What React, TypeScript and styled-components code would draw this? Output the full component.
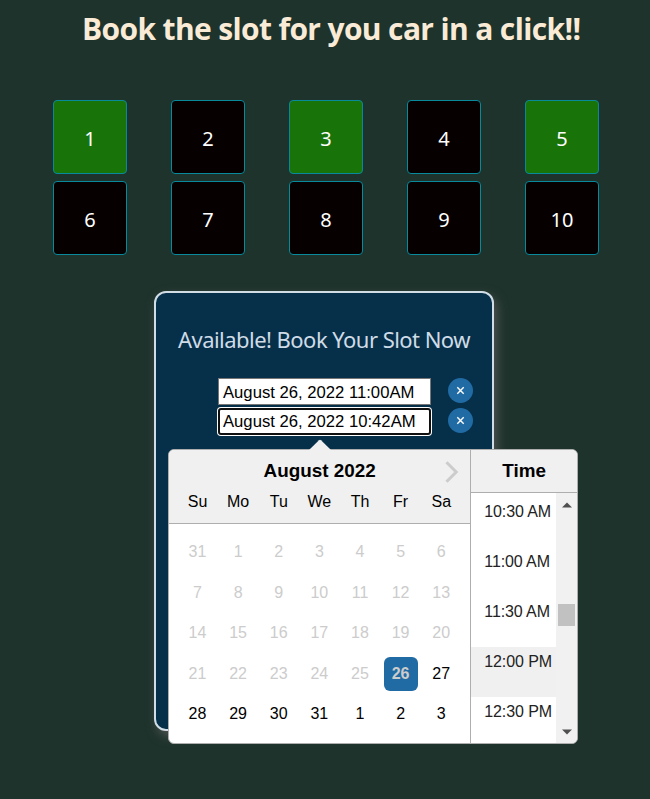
import React from "react";
import styled, { createGlobalStyle } from "styled-components";

const arial = `"Liberation Sans", Arial, sans-serif`;

const GlobalStyle = createGlobalStyle`
  * { box-sizing: border-box; }
  body { margin: 0; background: #1e332c; overflow: hidden; }
`;

const Page = styled.main`
  height: 799px;
  overflow: hidden;
  background: #1e332c;
`;

const Heading = styled.h1`
  margin: 0;
  padding: 9px 0 0 82px;
  height: 100px;
  color: #faebd7;
  font: 700 30px/40px "Open Sans", sans-serif;
  letter-spacing: -0.64px;
  white-space: nowrap;
`;

const SlotGrid = styled.section`
  display: grid;
  grid-template-columns: repeat(5, 74px);
  gap: 7px 44px;
  margin-left: 53px;
`;

const Slot = styled.button<{ $free: boolean }>`
  height: 74px;
  padding: 2px 0 0;
  border: 1px solid #088a9c;
  border-radius: 4px;
  background: ${(p) => (p.$free ? "#187408" : "#060000")};
  color: #fff;
  font: 20px "Noto Sans", sans-serif;
`;

const Card = styled.section`
  position: relative;
  width: 340px;
  height: 440px;
  margin: 36px 0 0 154px;
  border: 2px solid #d1dde5;
  border-radius: 12px;
  background: #06304a;
  box-shadow: 3px 5px 12px -1px #5a5a5a;
`;

const CardTitle = styled.h2`
  margin: 0;
  padding: 29px 0 0 22px;
  height: 85px;
  color: #cfdbe6;
  font: 400 22px/34px "Noto Sans", sans-serif;
  letter-spacing: -0.54px;
  white-space: nowrap;
`;

const FieldRow = styled.div`
  display: flex;
  align-items: flex-start;
  gap: 17px;
  height: 30px;
  padding-left: 62px;
`;

const DateInput = styled.input<{ $focused?: boolean }>`
  width: 213px;
  height: 27px;
  padding: ${(p) => (p.$focused ? "1px 3px" : "2px 4px 0")};
  border: ${(p) => (p.$focused ? "2px solid #101010" : "1px solid #767676")};
  border-radius: ${(p) => (p.$focused ? "3px" : "0")};
  outline: 0;
  box-shadow: ${(p) => (p.$focused ? "0 0 0 1px #fff" : "none")};
  background: #fff;
  color: #000;
  font: 16.67px ${arial};
`;

const ClearButton = styled.button`
  display: grid;
  place-items: center;
  width: 25px;
  height: 25px;
  padding: 0;
  border: 0;
  border-radius: 50%;
  background: #216ba5;
  color: #fff;
`;

const Popper = styled.div`
  position: absolute;
  top: 156px;
  left: 12px;
  display: flex;
  width: 410px;
  height: 295px;
  border: 1px solid #aeaeae;
  border-radius: 6px;
  background: #fff;
  color: #000;
  font: 16px ${arial};
`;

const Pointer = styled.svg`
  position: absolute;
  top: -11px;
  left: 140px;
`;

const Month = styled.div`
  width: 302px;
`;

const MonthHeader = styled.header`
  position: relative;
  height: 74px;
  padding-top: 10px;
  border-bottom: 1px solid #aeaeae;
  border-radius: 5px 0 0 0;
  background: #f0f0f0;
`;

const HeaderTitle = styled.div`
  height: 22px;
  text-align: center;
  font: 700 18.88px/22px ${arial};
`;

const NextArrow = styled.svg`
  position: absolute;
  top: 10px;
  right: 11px;
`;

const Week = styled.div`
  display: grid;
  grid-template-columns: repeat(7, 34px);
  column-gap: 6.64px;
  margin-left: 11.5px;
`;

const WeekDay = styled.span`
  height: 40px;
  line-height: 40px;
  text-align: center;
`;

const Weeks = styled.div`
  padding-top: 8px;
`;

const Day = styled.span<{ $muted: boolean; $selected: boolean }>`
  height: 34px;
  margin: 3.25px 0;
  border-radius: 6px;
  line-height: 34px;
  text-align: center;
  background: ${(p) => (p.$selected ? "#216ba5" : "transparent")};
  color: ${(p) => (p.$muted || p.$selected ? "#ccc" : "#000")};
  font-weight: ${(p) => (p.$selected ? 700 : 400)};
`;

const TimePanel = styled.div`
  display: flex;
  flex-direction: column;
  width: 107px;
  border-left: 1px solid #aeaeae;
`;

const TimeHeader = styled.header`
  height: 43px;
  padding-top: 10px;
  border-bottom: 1px solid #aeaeae;
  border-radius: 0 5px 0 0;
  background: #f0f0f0;
`;

const TimeBody = styled.div`
  display: flex;
  flex: 1;
  min-height: 0;
`;

const TimeList = styled.div`
  width: 85px;
  padding-top: 4px;
  overflow: hidden;
`;

const TimeItem = styled.div<{ $active: boolean }>`
  height: 50px;
  padding: 6px 0 0 13px;
  background: ${(p) => (p.$active ? "#f0f0f0" : "transparent")};
  color: #222;
  line-height: 18px;
  letter-spacing: -0.1px;
  white-space: nowrap;
`;

const ScrollTrack = styled.div`
  display: flex;
  flex: 1;
  flex-direction: column;
  align-items: center;
  justify-content: space-between;
  padding: 9px 0 8px;
  border-radius: 0 0 5px 0;
  background: #f1f1f1;
`;

const ScrollThumb = styled.div`
  width: 17px;
  height: 22px;
  margin-bottom: 7px;
  background: #c1c1c1;
`;

const slots = Array.from({ length: 10 }, (_, i) => i + 1);
const freeSlots = [1, 3, 5];
const weekDays = ["Su", "Mo", "Tu", "We", "Th", "Fr", "Sa"];
const weeks = [
  [31, 1, 2, 3, 4, 5, 6],
  [7, 8, 9, 10, 11, 12, 13],
  [14, 15, 16, 17, 18, 19, 20],
  [21, 22, 23, 24, 25, 26, 27],
  [28, 29, 30, 31, 1, 2, 3],
];
const times = ["10:30 AM", "11:00 AM", "11:30 AM", "12:00 PM", "12:30 PM"];

function Clear() {
  return (
    <ClearButton aria-label="Clear">
      <svg width="9" height="9" viewBox="0 0 9 9">
        <path d="M1.3 1.3 7.7 7.7M7.7 1.3 1.3 7.7" stroke="currentColor" strokeWidth="1.4" />
      </svg>
    </ClearButton>
  );
}

function DatePicker() {
  return (
    <Popper>
      <Month>
        <MonthHeader>
          <HeaderTitle>August 2022</HeaderTitle>
          <NextArrow width="14" height="24" viewBox="0 0 14 24">
            <path d="M1.5 2.2 11.2 12 1.5 21.8" fill="none" stroke="#ccc" strokeWidth="3" />
          </NextArrow>
          <Week>
            {weekDays.map((d) => <WeekDay key={d}>{d}</WeekDay>)}
          </Week>
        </MonthHeader>
        <Weeks>
          {weeks.map((week, w) => (
            <Week key={w}>
              {week.map((d) => (
                <Day key={d} $selected={w === 3 && d === 26} $muted={w < 3 || (w === 3 && d < 26)}>
                  {d}
                </Day>
              ))}
            </Week>
          ))}
        </Weeks>
      </Month>
      <TimePanel>
        <TimeHeader><HeaderTitle>Time</HeaderTitle></TimeHeader>
        <TimeBody>
          <TimeList>
            {times.map((t) => <TimeItem key={t} $active={t === "12:00 PM"}>{t}</TimeItem>)}
          </TimeList>
          <ScrollTrack>
            <svg width="10" height="6"><path d="M0 5.5 5 0.5 10 5.5Z" fill="#505050" /></svg>
            <ScrollThumb />
            <svg width="10" height="6"><path d="M0 0.5 5 5.5 10 0.5Z" fill="#505050" /></svg>
          </ScrollTrack>
        </TimeBody>
      </TimePanel>
      <Pointer width="22" height="12" viewBox="0 0 22 12">
        <path d="M0 12V11L10 1.2Q11 .4 12 1.2L22 11V12Z" fill="#f0f0f0" />
      </Pointer>
    </Popper>
  );
}

export default function App() {
  return (
    <Page>
      <GlobalStyle />
      <Heading>Book the slot for you car in a click!!</Heading>
      <SlotGrid>
        {slots.map((n) => <Slot key={n} $free={freeSlots.includes(n)}>{n}</Slot>)}
      </SlotGrid>
      <Card>
        <CardTitle>Available! Book Your Slot Now</CardTitle>
        <FieldRow>
          <DateInput readOnly value="August 26, 2022 11:00AM" />
          <Clear />
        </FieldRow>
        <FieldRow>
          <DateInput $focused readOnly value="August 26, 2022 10:42AM" />
          <Clear />
        </FieldRow>
        <DatePicker />
      </Card>
    </Page>
  );
}
